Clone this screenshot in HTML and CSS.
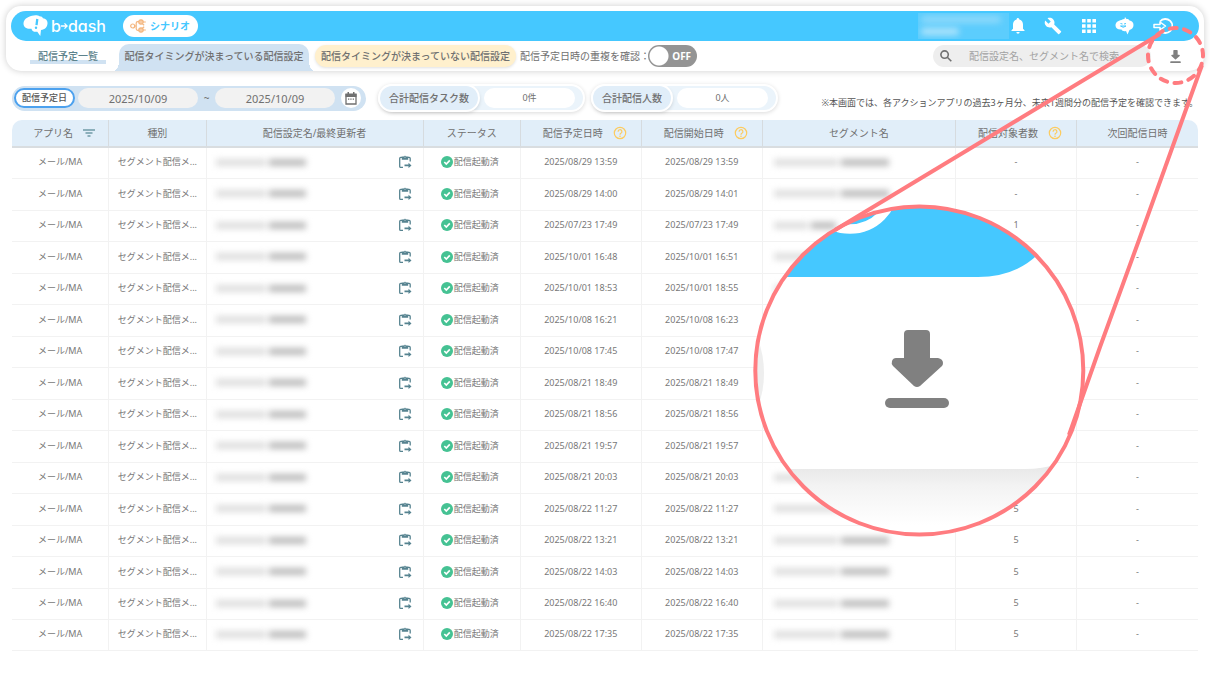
FILE: index.html
```html
<!DOCTYPE html>
<html lang="ja">
<head>
<meta charset="utf-8">
<title>配信予定一覧</title>
<link rel="stylesheet" href="styles.css">
</head>
<body>
<svg class="sprite" aria-hidden="true">
  <symbol id="i-clip" viewBox="0 0 14 14"><path d="M4 2.400H2.700q-1 0-1 1v8q0 1 1 1H5M10 2.400h1.200q1 0 1 1v3" fill="none" stroke="currentColor" stroke-width="1.300"/><path d="M3.800 1.600h1.800a1.500 1.500 0 0 1 2.800 0h1.800v3.200H3.800z" fill="currentColor"/><circle cx="7" cy="2" r=".6" fill="#fff"/><path d="M6.500 9.600h4V7.700l3 2.700-3 2.700v-1.900h-4z" fill="currentColor"/></symbol>
  <symbol id="i-check" viewBox="0 0 12 12"><circle cx="6" cy="6" r="6" fill="#45c293"/><path d="M3.300 6l2 2 3.500-3.600" fill="none" stroke="#fff" stroke-width="1.700"/></symbol>
  <symbol id="i-help" viewBox="0 0 14 14"><circle cx="7" cy="7" r="5.700" fill="none" stroke="#fccb5f" stroke-width="1.200"/><path d="M5.100 5.700a1.900 1.900 0 1 1 2.800 1.600c-.7.4-.9.7-.9 1.400" fill="none" stroke="#fccb5f" stroke-width="1.200"/><circle cx="7" cy="10.200" r=".8" fill="#fccb5f"/></symbol>
  <symbol id="i-down" viewBox="0 0 64 78"><path d="M23 0h18q4 0 4 4v24h8q5 1 5 5 0 2-1 3L35 56q-3 2-6 0L8 36q-2-2-1-5 1-3 4-3h8V4q0-4 4-4z"/><rect y="68" width="64" height="10" rx="5"/></symbol>
</svg>

<header class="top">
  <div class="bar">
    <a class="brand" href="#">
      <svg width="25" height="22" viewBox="0 0 25 22"><path d="M9 .8C11.500 -.2 15 0 16.500 1.200c2 0 3 .8 3.500 2 3 .2 4.800 2.500 4.500 5.300-.2 3.500-2.500 6-6.500 6.500l-.7 6-3-4.300c-3.500.5-5.500-.7-5.800-3C4 14.500.3 12 .5 8.500.8 4.500 4 2 9 .8z" fill="#fff"/><path d="M14.300 4l-.8 6.200" stroke="#45c8ff" stroke-width="2.300"/><circle cx="13" cy="12.800" r="1.200" fill="#45c8ff"/></svg>
      <span class="brand-name">b<svg width="7" height="8" viewBox="0 0 8 8"><path d="M0 4h7M4 1l3 3-3 3" fill="none" stroke="#fff" stroke-width="1.500"/></svg>dash</span>
    </a>
    <button class="scenario" type="button">
      <svg width="16" height="14" viewBox="0 0 16 14" fill="none" stroke="#f4b67e" stroke-width="1.200"><circle cx="2.700" cy="7" r="2"/><path d="M4.700 7h2M9 2.700H7.700q-1.500 0-1.500 1.500v5.600q0 1.500 1.500 1.500H9"/><circle cx="11" cy="3" r="2.200" fill="#f8cda6"/><circle cx="11" cy="11" r="2.200" fill="#f8cda6"/><path d="M13 3h2.800M13 11h2.800M12.500 5l1.700 1.300M12.500 9l1.700-1.300"/></svg>
      シナリオ
    </button>
    <div class="account" aria-hidden="true"><i></i><i></i></div>
    <nav class="tools">
      <button type="button" aria-label="通知"><svg width="14" height="16" viewBox="0 0 14 16" fill="#fff"><path d="M7 0q1.300 0 1.400 1.500C11 2.200 12 4.300 12 6.500v4.200l1.500 1.500v.8H.5v-.8L2 10.700V6.500c0-2.200 1-4.300 3.600-5C5.700.5 6 0 7 0zM5.300 14h3.400q-.2 1.700-1.700 1.700T5.300 14z"/></svg></button>
      <button type="button" aria-label="設定"><svg width="18" height="18" viewBox="0 0 24 24" fill="#fff"><path d="M22.700 19l-9.100-9.100c.9-2.300.4-5-1.500-6.900-2-2-5-2.400-7.400-1.300L9 6 6 9 1.600 4.700C.4 7.100.9 10.100 2.900 12.100c1.900 1.900 4.600 2.400 6.900 1.500l9.100 9.100c.4.4 1 .4 1.400 0l2.300-2.300c.5-.4.5-1.100.1-1.400z"/></svg></button>
      <button type="button" aria-label="アプリ"><svg width="14" height="14" viewBox="0 0 14 14" fill="#fff"><path d="M0 0h3.600v3.600H0zM5.200 0h3.600v3.600H5.200zM10.400 0H14v3.600h-3.600zM0 5.200h3.600v3.600H0zM5.200 5.200h3.600v3.600H5.200zM10.400 5.200H14v3.600h-3.600zM0 10.400h3.600V14H0zM5.200 10.400h3.600V14H5.200zM10.400 10.400H14V14h-3.600z"/></svg></button>
      <button type="button" aria-label="サポート"><svg width="19" height="18" viewBox="0 0 19 18"><path d="M10 0l1.500 2c1.500-.3 2.500.3 3 1.500 2.500.3 4 2 4 4.500s-1.500 4.500-4 5L12.500 17.500 11 14c-2 .5-4 0-4.500-1.500C3.500 13 .5 11.500.5 8.500S3 3.500 6.500 3C7.500 2 9 2 9.500 2z" fill="#fff"/><path d="M5.500 6.500l2 .5M11 6.500l-2 .5M5.500 9q2.700 2.600 5.500 0z" stroke="#45c8ff" fill="none" stroke-width="1"/></svg></button>
      <button type="button" aria-label="ログアウト"><svg width="20" height="16" viewBox="0 0 20 16" fill="none" stroke="#fff" stroke-width="1.800"><path d="M7 3.500A7 7 0 1 1 7 12.500"/><path d="M1 6.500h6V4l5.500 4L7 12V9.500H1z" stroke-width="1.500" stroke-linejoin="round"/></svg></button>
    </nav>
  </div>
  <div class="tabs">
    <a class="tab-list" href="#">配信予定一覧</a>
    <a class="tab-active" href="#">配信タイミングが決まっている配信設定</a>
    <a class="tab-open" href="#">配信タイミングが決まっていない配信設定</a>
    <label class="overlap" for="overlap">配信予定日時の重複を確認：</label>
    <span class="switch"><input type="checkbox" role="switch" id="overlap"><span>OFF</span></span>
    <label class="search"><svg width="12" height="12" viewBox="0 0 12 12" fill="none" stroke="#707070" stroke-width="1.600"><circle cx="4.600" cy="4.600" r="3.700"/><path d="M7.300 7.300l4 4"/></svg><input type="search" aria-label="検索" placeholder="配信設定名、セグメント名で検索"></label>
    <button class="download" type="button" aria-label="ダウンロード"><svg width="11" height="13"><use href="#i-down"/></svg></button>
  </div>
</header>

<main>
  <section class="filters">
    <div class="period">
      <button class="period-type" type="button">配信予定日</button>
      <input type="text" value="2025/10/09" aria-label="開始日">
      <span class="tilde">~</span>
      <input type="text" value="2025/10/09" aria-label="終了日">
      <button class="calendar" type="button" aria-label="カレンダー"><svg width="12" height="13" viewBox="0 0 12 13"><path d="M1 2.200h10v9.800H1z" fill="none" stroke="#707070" stroke-width="1.300"/><path d="M.5 2h11v3H.5zM2.500 0h1.500v2H2.500zM8 0h1.500v2H8zM3 6.500h1.300v1.300H3zM5.300 6.500h1.300v1.300H5.300zM7.700 6.500H9v1.300H7.700z" fill="#707070"/></svg></button>
    </div>
    <div class="total"><b>合計配信タスク数</b><span>0件</span></div>
    <div class="total"><b class="short">合計配信人数</b><span>0人</span></div>
    <p class="note">※本画面では、各アクションアプリの過去3ヶ月分、未来1週間分の配信予定を確認できます。</p>
  </section>

  <table>
    <colgroup><col class="c-s"><col class="c-s"><col class="c-name"><col class="c-s"><col class="c-m"><col class="c-m"><col class="c-seg"><col class="c-m"><col class="c-m"></colgroup>
    <thead>
      <tr>
        <th><div class="with-icon">アプリ名<svg width="12" height="8" viewBox="0 0 12 8"><path d="M0 1h12M2.500 4h7M4.500 7h3" stroke="#6f9aa6" stroke-width="1.500"/></svg></div></th>
        <th>種別</th>
        <th>配信設定名/最終更新者</th>
        <th>ステータス</th>
        <th><div class="with-icon">配信予定日時<svg width="14" height="14"><use href="#i-help"/></svg></div></th>
        <th><div class="with-icon">配信開始日時<svg width="14" height="14"><use href="#i-help"/></svg></div></th>
        <th>セグメント名</th>
        <th><div class="with-icon">配信対象者数<svg width="14" height="14"><use href="#i-help"/></svg></div></th>
        <th>次回配信日時</th>
      </tr>
    </thead>
    <tbody id="rows"></tbody>
  </table>
</main>

<svg class="callout" width="1210" height="680" viewBox="0 0 1210 680" aria-hidden="true">
  <defs>
    <clipPath id="lens"><circle cx="919.300" cy="370.500" r="164"/></clipPath>
    <linearGradient id="shade" x1="0" y1="0" x2="0" y2="1"><stop offset="0" stop-color="#e4e4e4"/><stop offset=".4" stop-color="#f3f3f3"/><stop offset="1" stop-color="#fff"/></linearGradient>
  </defs>
  <g clip-path="url(#lens)">
    <path d="M750 200h340v340H750z" fill="#fff"/>
    <path d="M750 460h340v65H750z" fill="url(#shade)"/>
    <path d="M750 270h340v175q-25 24-65 24H750z" fill="#fff"/>
    <path d="M750 190h320q-20 87-92 87H750z" fill="#45c8ff"/>
    <circle cx="850" cy="185" r="44" fill="none" stroke="#fff" stroke-width="9.500"/>
    <ellipse cx="744" cy="373" rx="20" ry="46" fill="#eee"/>
  </g>
  <svg x="885" y="330" width="64" height="78" fill="#808080"><use href="#i-down"/></svg>
  <g fill="none" stroke="#ff7c80" stroke-width="4">
    <circle cx="919.300" cy="370.500" r="164"/>
    <path d="M1160 34L835 230M1202 65L1139 240 1100 347 1069 435"/>
    <circle cx="1175.500" cy="55.500" r="27.500" stroke-linecap="round" stroke-dasharray="7 7.400" stroke-dashoffset="6"/>
  </g>
</svg>
<script src="rows.js"></script>
</body>
</html>
```
FILE: styles.css
```css
* { box-sizing: border-box; }
body {
  margin: 0;
  padding: 6px 6px 0;
  background: #fff;
  color: #707070;
  font: 10px/16px "Noto Sans", "Noto Sans CJK JP", sans-serif;
}
button, input { font: inherit; color: inherit; border: 0; padding: 0; background: none; outline: 0; }
a { color: inherit; text-decoration: none; }
.sprite { position: absolute; width: 0; height: 0; }

.top { border-radius: 15px; background: #fff; padding: 5px 5px 0; box-shadow: 0 0 7px rgba(0, 0, 0, .2); }
.bar { display: flex; align-items: center; height: 30px; padding: 0 26px 0 12px; border-radius: 15px; background: #45c8ff; }
.brand { display: flex; align-items: center; gap: 3px; color: #fff; }
.brand-name { display: flex; align-items: center; font: 500 16px/20px Inter, sans-serif; font-feature-settings: "cv11"; }
.scenario { display: flex; align-items: center; gap: 4px; height: 22px; margin-left: 17px; padding: 0 8px 0 7px; border-radius: 11px; background: #fff; color: #45c8ff; font-weight: 700; }
.account { display: grid; gap: 3px; width: 91px; height: 26px; margin-left: auto; padding: 3px; background: #5ccdfd; overflow: hidden; }
.account i { width: 80px; height: 7px; border-radius: 3px; background: #8fd9fb; filter: blur(3px); }
.account i + i { width: 38px; background: #b0e4fb; }
.tools { display: flex; justify-content: space-between; width: 162px; margin-left: 2px; }
.tools button { display: grid; place-items: center; height: 22px; }

.tabs { display: flex; align-items: center; height: 30px; }
.tab-list { width: 76px; height: 15px; margin: 0 13px 0 19px; text-align: center; font-weight: 500; color: #5d838c; line-height: 14px; background: linear-gradient(#d0e2f2, #d0e2f2) 0 100% / 100% 4px no-repeat; }
.tab-active { position: relative; align-self: end; width: 190px; height: 27px; border-radius: 10px 10px 0 0; background: #d0e2f2; text-align: center; font-weight: 500; line-height: 24px; white-space: nowrap; }
.tab-active::before, .tab-active::after { content: ""; position: absolute; bottom: 0; width: 6px; height: 10px; }
.tab-active::before { right: 100%; background: radial-gradient(ellipse at 0 0, transparent 70%, #d0e2f2 71%); }
.tab-active::after { left: 100%; background: radial-gradient(ellipse at 100% 0, transparent 70%, #d0e2f2 71%); }
.tab-open { height: 22px; margin-left: 6px; padding: 0 6px; border-radius: 11px; background: #fff0cd; box-shadow: 0 1px 3px rgba(0, 0, 0, .12); font-weight: 500; line-height: 22px; white-space: nowrap; }
.overlap { margin-left: 4px; white-space: nowrap; }
.switch { position: relative; flex: none; width: 49px; height: 22px; margin-left: -2px; }
.switch input { appearance: none; display: block; width: 100%; height: 100%; margin: 0; border-radius: 11px; background: radial-gradient(circle at 11px 50%, #fff 9px, #949494 10px); }
.switch span { position: absolute; right: 6px; top: 3px; color: #fff; font-weight: 700; pointer-events: none; }
.search { display: flex; align-items: center; flex: 0 1 218px; height: 22px; margin-left: auto; padding-left: 7px; gap: 17px; border-radius: 11px; background: #eee; }
.search svg { flex: none; }
.search input { flex: 1; min-width: 0; }
.search input::placeholder { color: #a2a2a2; opacity: 1; }
.download { display: grid; place-items: center; width: 30px; height: 24px; margin: 0 9px; fill: #808080; }

main { padding: 13px 6px 30px; }
.filters { display: flex; align-items: center; height: 28px; margin-bottom: 8px; }
.period { display: flex; align-items: center; height: 25px; padding: 0 5px 0 2px; border-radius: 13px; background: #d0e2f2; }
.period-type { width: 61px; height: 20px; margin-right: 3px; border: 2px solid #4ca1ee; border-radius: 10px; background: #fff; color: #555; font-size: 9px; font-weight: 500; line-height: 14px; }
.period input { width: 120px; height: 20px; border-radius: 10px; background: #f2f2f2; text-align: center; font-size: 11px; }
.tilde { width: 17px; text-align: center; }
.calendar { display: grid; place-items: center; width: 20px; height: 20px; margin-left: 6px; border-radius: 10px; background: #fff; }
.total { display: flex; align-items: center; margin-left: 12px; border: 2px solid #fff; border-radius: 14px; background: #ebf4fb; box-shadow: 0 1px 4px rgba(0, 0, 0, .15); }
.total b { width: 98px; height: 24px; border-radius: 12px; background: #e1eef9; box-shadow: 0 0 0 2px #fff, 1px 2px 4px rgba(0, 0, 0, .2); text-align: center; font-weight: 500; line-height: 24px; }
.total b.short { width: 78px; }
.total + .total { margin-left: 6px; }
.total span { width: 91px; height: 20px; margin: 0 8px 0 6px; border-radius: 10px; background: #fff; text-align: center; font-size: 9px; line-height: 20px; }
.note { margin: 9px 0 0 auto; color: #555; font-size: 9px; line-height: 16px; white-space: nowrap; }

table { width: 100%; table-layout: fixed; border-collapse: separate; border-spacing: 0; }
.c-s { width: 8.2%; }
.c-name { width: 18.300%; }
.c-m { width: 10.2%; }
.c-seg { width: 16.300%; }
th, td { padding: 0; border-right: 1px solid #f2f2f2; border-bottom: 1px solid #f2f2f2; text-align: center; white-space: nowrap; }
th { height: 28px; border-right-color: #d6dbdf; border-bottom: 2px solid #d9dde0; background: #e1eef9; font-weight: 400; }
th:first-child { border-top-left-radius: 10px; }
th:last-child { border-top-right-radius: 10px; }
th:last-child, td:last-child { border-right: 0; }
.with-icon { display: flex; align-items: center; justify-content: center; gap: 10px; padding-left: 8px; }
td { height: 31px; padding-bottom: 2px; color: #787878; font-size: 9px; }
tr:nth-child(even) td { height: 32px; }
tr:last-child td { height: 31px; }
.name { display: flex; align-items: center; justify-content: space-between; padding: 0 11px 0 8px; color: #568390; }
.status { display: flex; align-items: center; justify-content: center; gap: 1px; padding-right: 4px; }
.masked { display: flex; align-items: center; gap: 3px; padding-left: 1px; filter: blur(3px); }
.masked::before, .masked::after { content: ""; height: 7px; }
.masked::before { width: 50px; background: #dedede; }
.masked::after { width: 37px; background: #bcbcbc; }
.segment { padding-left: 11px; }
.segment::before { width: 64px; }
.segment::after { width: 48px; }
.segment.brief::before { width: 34px; }
.segment.brief::after { width: 25px; }

.callout { position: absolute; left: 0; top: 0; pointer-events: none; }
```
FILE: rows.js
```js
const rows = [
  ["2025/08/29 13:59", "2025/08/29 13:59", "-"],
  ["2025/08/29 14:00", "2025/08/29 14:01", "-"],
  ["2025/07/23 17:49", "2025/07/23 17:49", "1"],
  ["2025/10/01 16:48", "2025/10/01 16:51", "5"],
  ["2025/10/01 18:53", "2025/10/01 18:55", "5"],
  ["2025/10/08 16:21", "2025/10/08 16:23", "5"],
  ["2025/10/08 17:45", "2025/10/08 17:47", "5"],
  ["2025/08/21 18:49", "2025/08/21 18:49", "5"],
  ["2025/08/21 18:56", "2025/08/21 18:56", "5"],
  ["2025/08/21 19:57", "2025/08/21 19:57", "5"],
  ["2025/08/21 20:03", "2025/08/21 20:03", "5"],
  ["2025/08/22 11:27", "2025/08/22 11:27", "5"],
  ["2025/08/22 13:21", "2025/08/22 13:21", "5"],
  ["2025/08/22 14:03", "2025/08/22 14:03", "5"],
  ["2025/08/22 16:40", "2025/08/22 16:40", "5"],
  ["2025/08/22 17:35", "2025/08/22 17:35", "5"]
];

document.getElementById("rows").innerHTML = rows.map(([planned, started, count]) => `
  <tr>
    <td>メール/MA</td>
    <td>セグメント配信メ...</td>
    <td><div class="name"><span class="masked"></span><svg width="14" height="14"><use href="#i-clip"/></svg></div></td>
    <td><div class="status"><svg width="12" height="12"><use href="#i-check"/></svg>配信起動済</div></td>
    <td>${planned}</td>
    <td>${started}</td>
    <td><div class="masked segment${count === "1" ? " brief" : ""}"></div></td>
    <td>${count}</td>
    <td>-</td>
  </tr>`).join("");
```
